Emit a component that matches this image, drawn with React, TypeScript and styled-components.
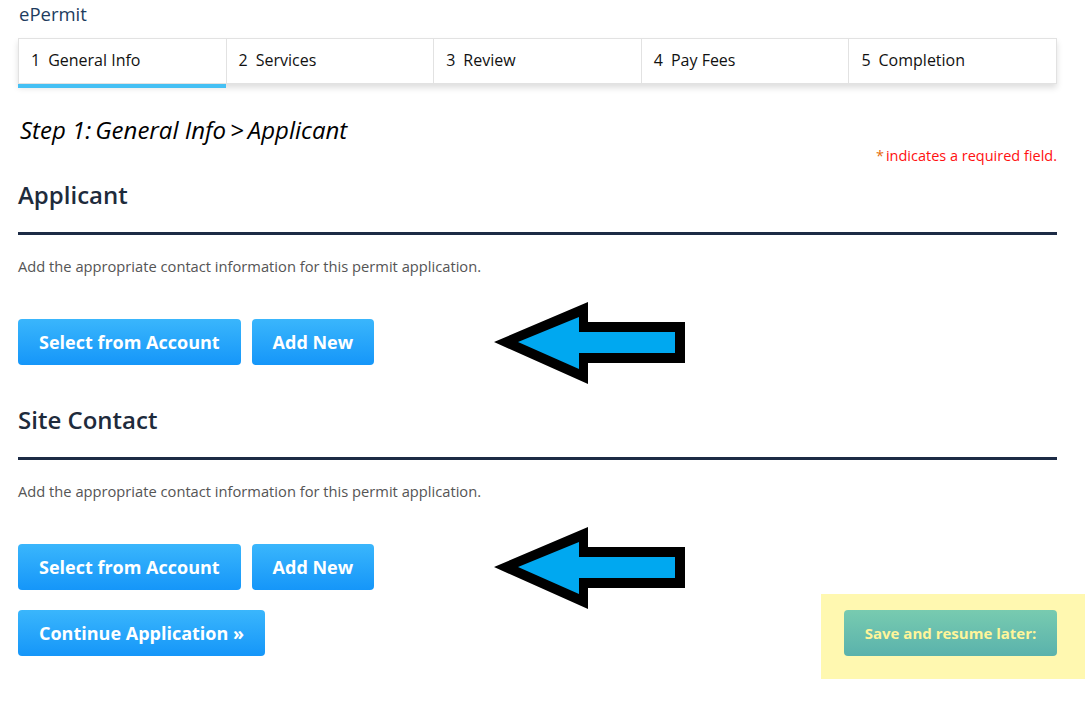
import React, { FC } from 'react'
import styled, { createGlobalStyle } from 'styled-components'

const GlobalStyle = createGlobalStyle`
  body {
    margin: 0;
    background: #ffffff;
    font-family: "Open Sans", Lato, "Liberation Sans", sans-serif;
  }
`

const Page = styled.div`
  padding: 0 34px 40px 18px;
  color: #222;
`

const Brand = styled.div`
  font-size: 18.5px;
  line-height: 28px;
  font-weight: 500;
  color: #1d3c5e;
  padding-left: 1px;
`

const TabBar = styled.div`
  display: flex;
  margin-top: 10px;
  height: 46px;
  border: 1px solid #e2e2e2;
  box-sizing: border-box;
  box-shadow: 0 4px 6px rgba(0, 0, 0, 0.13);
`

const Tab = styled.div<{ active?: boolean }>`
  position: relative;
  flex: 1;
  display: flex;
  align-items: center;
  padding-left: 12px;
  padding-bottom: 2px;
  font-size: 16px;
  color: #111;
  border-left: 1px solid #e2e2e2;

  &:first-child {
    border-left: none;
  }

  span {
    margin-right: 8px;
  }

  &::after {
    content: '';
    display: ${props => props.active ? 'block' : 'none'};
    position: absolute;
    left: -1px;
    right: 0;
    bottom: -5px;
    height: 4px;
    background: #45c0f4;
  }
`

const StepTitle = styled.h1`
  margin: 31px 0 0 2px;
  font-size: 24px;
  line-height: 30px;
  font-style: italic;
  font-weight: 500;
  color: #000;
`

const Required = styled.div`
  margin-top: 1px;
  text-align: right;
  font-size: 14.5px;
  line-height: 20px;
  color: #ff1010;

  b {
    color: #e56a0b;
    font-weight: 400;
    margin-right: 2px;
  }
`

const SectionTitle = styled.h2<{ first?: boolean }>`
  margin: ${props => props.first ? '13px' : '39px'} 0 0;
  font-size: 24px;
  line-height: 32px;
  font-weight: 600;
  color: #1e2b3c;
`

const Rule = styled.hr`
  margin: 21px 0 0;
  border: none;
  height: 3px;
  background: #1c2b45;
`

const Hint = styled.p`
  margin: 21px 0 0;
  font-size: 14.7px;
  line-height: 20px;
  color: #555;
`

const ButtonRow = styled.div`
  position: relative;
  display: flex;
  gap: 11px;
  margin-top: 43px;
`

const Button = styled.button`
  height: 46px;
  padding: 0 21px;
  border: none;
  border-radius: 4px;
  background: linear-gradient(#3ab6fc, #1596f9);
  color: #fff;
  font-family: inherit;
  font-size: 18px;
  font-weight: 700;
  cursor: pointer;
`

const ArrowMark = styled.svg`
  position: absolute;
  left: 476px;
  top: -17px;
`

const Footer = styled.div`
  display: flex;
  justify-content: space-between;
  align-items: center;
  margin-top: 20px;
`

const Highlight = styled.div`
  position: relative;

  &::before {
    content: '';
    position: absolute;
    left: -23px;
    right: -28px;
    top: -16px;
    bottom: -23px;
    background: #fff8b0;
  }
`

const SaveButton = styled.button`
  position: relative;
  height: 46px;
  width: 213px;
  border: none;
  border-radius: 4px;
  background: linear-gradient(#78cbb0, #5ab2ac);
  color: #fff59a;
  font-family: inherit;
  font-size: 15px;
  font-weight: 700;
`

const Arrow: FC = () => (
  <ArrowMark width="193" height="83" viewBox="0 0 193 83">
    <polygon points="0,40 94,0 94,20 191,20 191,61 94,61 94,82" fill="#000" />
    <polygon points="24,40 85,15 85,30 181,30 181,51 85,51 85,67" fill="#00a8f0" />
  </ArrowMark>
)

const steps = ['General Info', 'Services', 'Review', 'Pay Fees', 'Completion']

const ContactSection: FC<{ title: string, first?: boolean }> = ({ title, first }) => (
  <>
    <SectionTitle first={first}>{title}</SectionTitle>
    <Rule />
    <Hint>Add the appropriate contact information for this permit application.</Hint>
    <ButtonRow>
      <Button>Select from Account</Button>
      <Button>Add New</Button>
      <Arrow />
    </ButtonRow>
  </>
)

const App: FC = () => (
  <>
    <GlobalStyle />
    <Page>
      <Brand>ePermit</Brand>
      <TabBar>
        {steps.map((step, i) => (
          <Tab key={step} active={i === 0}><span>{i + 1}</span>{step}</Tab>
        ))}
      </TabBar>
      <StepTitle>Step 1:{'\u2009'}General Info{'\u2009'}&gt;{'\u2009'}Applicant</StepTitle>
      <Required><b>*</b>indicates a required field.</Required>
      <ContactSection title="Applicant" first />
      <ContactSection title="Site Contact" />
      <Footer>
        <Button>Continue Application »</Button>
        <Highlight>
          <SaveButton>Save and resume later:</SaveButton>
        </Highlight>
      </Footer>
    </Page>
  </>
)

export default App
